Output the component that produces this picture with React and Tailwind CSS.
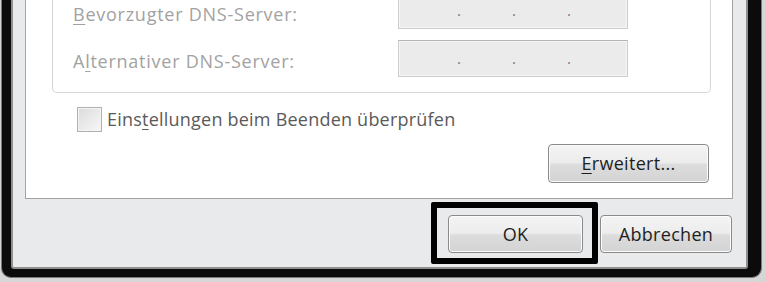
import React from "react";

const font = { fontFamily: '"Open Sans", "Noto Sans", sans-serif' };

function IpBox() {
  return (
    <div className="flex h-[37px] w-[230px] items-center border border-[#cdcdcd] border-t-[#b4b4b4] bg-[#ebebec] shadow-[inset_0_0_0_1px_#f6f6f6] text-[15px] text-[#7a7a7a]">
      <span className="w-[58px]" />
      <span className="w-[55px]">.</span>
      <span className="w-[55px]">.</span>
      <span>.</span>
    </div>
  );
}

function Btn({ children, className = "" }) {
  return (
    <div
      className={
        "flex items-center justify-center rounded-[4px] border border-[#8a8a8a] bg-[linear-gradient(#f4f4f4_0%,#ececec_48%,#dddddd_52%,#d3d3d3_100%)] shadow-[inset_0_0_0_1px_#fbfbfb] text-[18px] tracking-[0.3px] text-[#1e1e1e] " +
        className
      }
    >
      {children}
    </div>
  );
}

export default function App() {
  return (
    <div className="h-[282px] w-[765px] overflow-hidden bg-[#d6d6d6]" style={font}>
      <div className="ml-[1px] h-[278px] w-[761px] rounded-b-[10px] border-x border-b border-[#7a7a7a] bg-[#0b0b0b] pb-[8px] pl-[9px] pr-[13px]">
        <div className="flex h-[269px] flex-col rounded-b-[3px] border-x-2 border-b-2 border-[#8f8f8f] bg-[#e9eaec] pl-[12px] pr-[13px]">
          {/* white panel */}
          <div className="flex h-[199px] flex-col border-x border-b border-[#a3a3a3] bg-white">
            {/* group box */}
            <div className="ml-[26px] mr-[21px] -mt-[8px] flex flex-col gap-[11px] rounded-b-[5px] border-x border-b border-[#d6d6d6] pb-[15px] pl-[20px]">
              <div className="grid grid-cols-[325px_230px] items-start">
                <span className="mt-[8px] text-[18px] leading-[28px] tracking-[0.75px] text-[#a2a2a2]">
                  <span className="underline decoration-1 underline-offset-[3px]">B</span>evorzugter DNS-Server:
                </span>
                <IpBox />
              </div>
              <div className="grid grid-cols-[325px_230px] items-start">
                <span className="mt-[7px] text-[18px] leading-[28px] tracking-[0.75px] text-[#a2a2a2]">
                  A<span className="underline decoration-1 underline-offset-[3px]">l</span>ternativer DNS-Server:
                </span>
                <IpBox />
              </div>
            </div>
            {/* checkbox row */}
            <div className="ml-[51px] mt-[13px] flex items-center gap-[5px]">
              <div className="h-[25px] w-[25px] border border-[#b0b0b0] bg-[linear-gradient(135deg,#dcdcdc,#f7f7f7)] shadow-[inset_0_0_0_1px_#f4f4f4]" />
              <span className="text-[18px] tracking-[0.22px] text-[#5a5a5a]">
                Eins<span className="underline decoration-1 underline-offset-[3px]">t</span>ellungen beim Beenden überprüfen
              </span>
            </div>
            <div className="mr-[23px] mt-[11px] flex justify-end">
              <Btn className="h-[39px] w-[161px]">
                <span>
                  <span className="underline decoration-1 underline-offset-[3px]">E</span>rweitert...
                </span>
              </Btn>
            </div>
          </div>
          {/* bottom buttons */}
          <div className="flex flex-1 items-start justify-end pr-[1px]">
            <div className="mt-[3px] flex h-[62px] w-[167px] items-start rounded-[2px] border-[6px] border-black pl-[11px] pt-[7px]">
              <Btn className="h-[38px] w-[135px]">OK</Btn>
            </div>
            <Btn className="ml-[2px] mt-[16px] h-[38px] w-[132px]">Abbrechen</Btn>
          </div>
        </div>
      </div>
    </div>
  );
}
